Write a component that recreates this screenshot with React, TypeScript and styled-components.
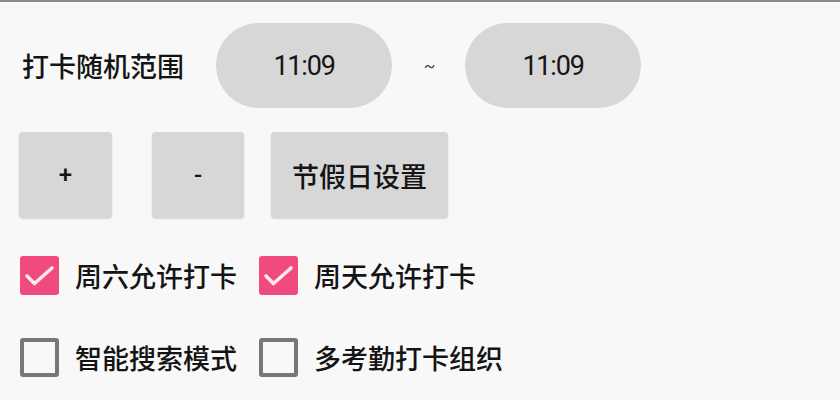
import React from 'react';
import styled, { createGlobalStyle } from 'styled-components';

const GlobalStyle = createGlobalStyle`
    html, body {
        margin: 0;
        padding: 0;
        background: #f8f8f8;
    }
    body {
        font-family: Roboto, "Noto Sans CJK SC", sans-serif;
        color: #141414;
    }
`;

const Screen = styled.div`
    width: 840px;
    height: 400px;
    box-sizing: border-box;
    border-top: 2px solid #8a8a8a;
    padding: 21px 0 0 19px;
    overflow: hidden;
`;

const TimeRow = styled.div`
    display: flex;
    align-items: center;
    height: 85px;
`;

const Label = styled.span`
    font-family: "Noto Sans CJK SC", sans-serif;
    font-size: 27px;
    font-weight: 500;
    line-height: 1;
    margin-left: 3px;
    margin-right: 32px;
    white-space: nowrap;
`;

const TimePill = styled.div`
    width: 176px;
    height: 85px;
    border-radius: 43px;
    background: #d7d7d7;
    display: flex;
    align-items: center;
    justify-content: center;
    font-family: Roboto, sans-serif;
    font-size: 27px;
    letter-spacing: -1.2px;
    color: #151515;
`;

const Tilde = styled.span`
    width: 73px;
    text-align: center;
    font-size: 17px;
    color: #444;
    padding-left: 2px;
    box-sizing: border-box;
`;

const ButtonRow = styled.div`
    display: flex;
    margin-top: 24px;
`;

const ActionButton = styled.button<{ $width: number; $gap: number; $big?: boolean }>`
    width: ${p => p.$width}px;
    height: 86px;
    margin-right: ${p => p.$gap}px;
    border: none;
    border-radius: 4px;
    background: #d7d7d7;
    box-shadow: 0 1px 2px rgba(0, 0, 0, 0.14);
    font-family: Roboto, "Noto Sans CJK SC", sans-serif;
    font-size: ${p => (p.$big ? 27 : 24)}px;
    font-weight: 500;
    color: #151515;
    padding: 0;
    display: flex;
    align-items: center;
    justify-content: center;
`;

const OptionGrid = styled.div`
    display: grid;
    grid-template-columns: 239px auto;
    row-gap: 43px;
    margin-top: 38px;
    margin-left: 1px;
`;

const Option = styled.label`
    display: flex;
    align-items: center;
    gap: 16px;
    height: 39px;
`;

const Box = styled.span<{ $checked: boolean }>`
    width: 39px;
    height: 39px;
    box-sizing: border-box;
    border-radius: 3px;
    flex-shrink: 0;
    display: flex;
    align-items: center;
    justify-content: center;
    background: ${p => (p.$checked ? '#f04a7e' : 'transparent')};
    border: ${p => (p.$checked ? 'none' : '4px solid #777777')};
`;

const OptionText = styled.span`
    font-family: "Noto Sans CJK SC", sans-serif;
    font-size: 27px;
    font-weight: 500;
    line-height: 1;
    white-space: nowrap;
`;

const Check = () => (
    <svg width="39" height="39" viewBox="0 0 39 39">
        <polyline
            points="7,20 14.5,27.5 32,12"
            fill="none"
            stroke="#fde8ef"
            strokeWidth="3.6"
            strokeLinecap="round"
            strokeLinejoin="round"
        />
    </svg>
);

const options = [
    { text: '周六允许打卡', checked: true },
    { text: '周天允许打卡', checked: true },
    { text: '智能搜索模式', checked: false },
    { text: '多考勤打卡组织', checked: false },
];

const App = () => {
    return (
        <>
            <GlobalStyle />
            <Screen>
                <TimeRow>
                    <Label>打卡随机范围</Label>
                    <TimePill>11:09</TimePill>
                    <Tilde>~</Tilde>
                    <TimePill>11:09</TimePill>
                </TimeRow>
                <ButtonRow>
                    <ActionButton $width={93} $gap={40}>+</ActionButton>
                    <ActionButton $width={92} $gap={27}>-</ActionButton>
                    <ActionButton $width={177} $gap={0} $big>节假日设置</ActionButton>
                </ButtonRow>
                <OptionGrid>
                    {options.map(o => (
                        <Option key={o.text}>
                            <Box $checked={o.checked}>{o.checked && <Check />}</Box>
                            <OptionText>{o.text}</OptionText>
                        </Option>
                    ))}
                </OptionGrid>
            </Screen>
        </>
    );
};

export default App;
